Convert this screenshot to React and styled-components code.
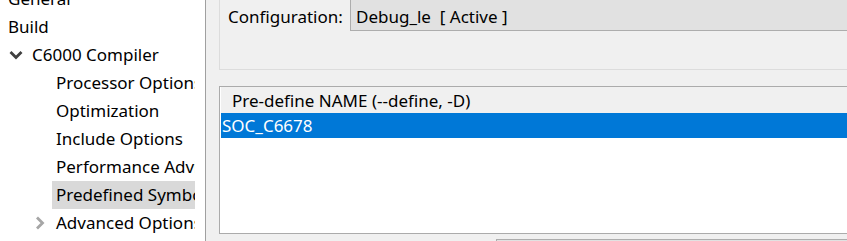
import styled, { createGlobalStyle } from 'styled-components';

const Global = createGlobalStyle`
  html, body {
    margin: 0;
    padding: 0;
    overflow: hidden;
    background: #f0f0f0;
  }
  body {
    font-family: "Noto Sans", "Open Sans", sans-serif;
    font-size: 17px;
    color: #000;
  }
`;

// Fenetre complete
const Window = styled.div`
  display: flex;
  width: 847px;
  height: 241px;
  overflow: hidden;
`;

// Arbre de gauche
const Sidebar = styled.div`
  width: 205px;
  flex: none;
  background: #fff;
  border-right: 1px solid #a0a0a0;
  overflow: hidden;
`;

const Tree = styled.ul`
  list-style: none;
  margin: -15px 0 0 0;
  padding: 0;
`;

const Row = styled.li`
  display: flex;
  align-items: center;
  height: 28px;
  padding-left: ${({ level }) => level * 24 + 8}px;
  position: relative;
`;

const Toggle = styled.span`
  position: absolute;
  left: ${({ level }) => level * 24 + 8}px;
  top: 0;
  height: 28px;
  width: 16px;
  display: flex;
  align-items: center;
  justify-content: center;
`;

const Label = styled.span`
  display: block;
  width: ${({ level }) => 195 - (level * 24 + 8) + 4}px;
  margin-left: -4px;
  padding-left: 4px;
  line-height: 28px;
  white-space: nowrap;
  overflow: hidden;
  box-sizing: border-box;
  background: ${({ selected }) => (selected ? '#d9d9d9' : 'transparent')};
`;

// Panneau de droite
const Main = styled.div`
  flex: 1;
  display: flex;
  flex-direction: column;
  padding-left: 13px;
  min-width: 0;
  & > * {
    flex: none;
  }
`;

const GroupBox = styled.div`
  margin-top: -10px;
  height: 80px;
  border: 1px solid #dcdcdc;
  border-right: none;
  box-sizing: border-box;
  padding: 0 0 0 8px;
  display: flex;
  align-items: flex-start;
`;

const ConfigLabel = styled.span`
  width: 122px;
  flex: none;
  line-height: 26px;
  margin-top: 13px;
`;

const Combo = styled.div`
  flex: 1;
  height: 35px;
  margin-top: 5px;
  background: #e1e1e1;
  border: 1px solid #adadad;
  border-right: none;
  box-sizing: border-box;
  padding: 8px 0 0 5px;
  line-height: 23px;
  white-space: pre;
`;

const Table = styled.div`
  margin-top: 16px;
  height: 148px;
  border: 1px solid #ababab;
  border-right: none;
  box-sizing: border-box;
  background: #fff;
  padding: 0 0 0 1px;
`;

const Header = styled.div`
  height: 26px;
  line-height: 28px;
  padding-left: 11px;
  background: #f0f0f0;
  white-space: nowrap;
`;

const Item = styled.div`
  height: 25px;
  line-height: 25px;
  padding-left: 1px;
  background: ${({ selected }) => (selected ? '#0078d7' : '#fff')};
  color: ${({ selected }) => (selected ? '#fff' : '#000')};
`;

const Footer = styled.div`
  display: flex;
  padding-top: 5px;
`;

const Button = styled.div`
  margin-left: 277px;
  flex: 1;
  height: 30px;
  border: 1px solid #adadad;
  border-right: none;
  background: #e1e1e1;
`;

const Chevron = ({ open, color }) => (
  <svg width="14" height="14" viewBox="0 0 14 14">
    {open ? (
      <polyline points="1.5,4 7,9.5 12.5,4" fill="none" stroke={color} strokeWidth="2.8" />
    ) : (
      <polyline points="4,1.5 9.5,7 4,12.5" fill="none" stroke={color} strokeWidth="2.8" />
    )}
  </svg>
);

const items = [
  { text: 'General', level: 0 },
  { text: 'Build', level: 0 },
  { text: 'C6000 Compiler', level: 1, toggle: 'open' },
  { text: 'Processor Options', level: 2 },
  { text: 'Optimization', level: 2 },
  { text: 'Include Options', level: 2 },
  { text: 'Performance Advisor', level: 2 },
  { text: 'Predefined Symbols', level: 2, selected: true },
  { text: 'Advanced Options', level: 2, toggle: 'closed' },
];

const App = () => (
  <Window>
    <Global />
    <Sidebar>
      <Tree>
        {items.map((it) => (
          <Row key={it.text} level={it.level}>
            {it.toggle && (
              <Toggle level={it.level - 1}>
                <Chevron open={it.toggle === 'open'} color={it.toggle === 'open' ? '#404040' : '#a6a6a6'} />
              </Toggle>
            )}
            <Label level={it.level} selected={it.selected}>{it.text}</Label>
          </Row>
        ))}
      </Tree>
    </Sidebar>
    <Main>
      <GroupBox>
        <ConfigLabel>Configuration:</ConfigLabel>
        <Combo>{'Debug_le  [ Active ]'}</Combo>
      </GroupBox>
      <Table>
        <Header>Pre-define NAME (--define, -D)</Header>
        <Item selected>SOC_C6678</Item>
      </Table>
      <Footer>
        <Button />
      </Footer>
    </Main>
  </Window>
);

export default App;
